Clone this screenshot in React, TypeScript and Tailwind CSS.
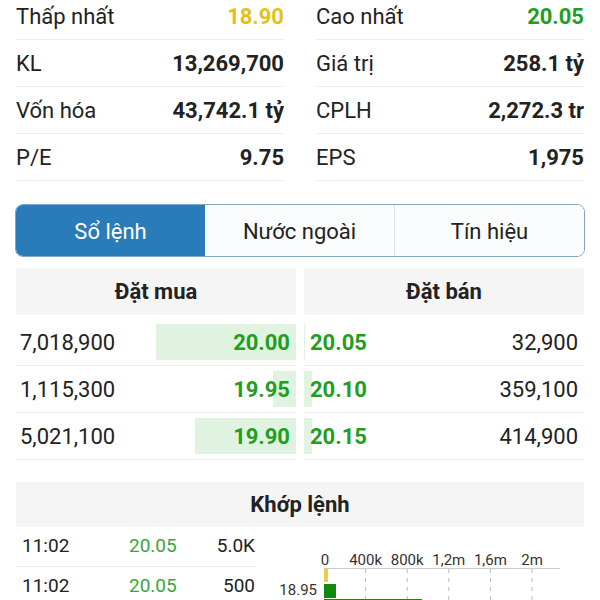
import React from 'react';

const stats = [
  [
    { label: 'Thấp nhất', value: '18.90', color: 'text-[#e5c019]' },
    { label: 'Cao nhất', value: '20.05', color: 'text-[#1f9e1f]' },
  ],
  [
    { label: 'KL', value: '13,269,700', color: 'text-[#222]' },
    { label: 'Giá trị', value: '258.1 tỷ', color: 'text-[#222]' },
  ],
  [
    { label: 'Vốn hóa', value: '43,742.1 tỷ', color: 'text-[#222]' },
    { label: 'CPLH', value: '2,272.3 tr', color: 'text-[#222]' },
  ],
  [
    { label: 'P/E', value: '9.75', color: 'text-[#222]' },
    { label: 'EPS', value: '1,975', color: 'text-[#222]' },
  ],
];

const book = [
  { buyVol: '7,018,900', buy: '20.00', buyBar: 140, sell: '20.05', sellVol: '32,900', sellBar: 1 },
  { buyVol: '1,115,300', buy: '19.95', buyBar: 23, sell: '20.10', sellVol: '359,100', sellBar: 8 },
  { buyVol: '5,021,100', buy: '19.90', buyBar: 101, sell: '20.15', sellVol: '414,900', sellBar: 8 },
];

const trades = [
  { time: '11:02', price: '20.05', vol: '5.0K' },
  { time: '11:02', price: '20.05', vol: '500' },
];

const ticks = ['0', '400k', '800k', '1,2m', '1,6m', '2m'];

function VolumeChart() {
  // x = 68 is the zero line, 41.6px per 400k
  return (
    <svg width="324" height="92" viewBox="0 0 324 92" className="block">
      {ticks.map((t, i) => {
        const x = 68 + i * 41.6;
        return (
          <g key={t}>
            <text x={x + (i === 0 ? 1 : 0)} y="38" fontSize="15" fill="#333" textAnchor="middle" fontFamily="Roboto, sans-serif">
              {t}
            </text>
            {i > 0 && <line x1={x} y1="42" x2={x} y2="92" stroke="#bbb" strokeWidth="1" strokeDasharray="4 5" />}
          </g>
        );
      })}
      <line x1="68" y1="41.5" x2="304" y2="41.5" stroke="#ccc" strokeWidth="1" />
      <rect x="68" y="42" width="4" height="13" fill="#f2c94c" />
      <text x="61" y="68" fontSize="15" fill="#333" textAnchor="end" fontFamily="Roboto, sans-serif">
        18.95
      </text>
      <rect x="68" y="57" width="12" height="14" fill="#0f8a0f" />
      <rect x="68" y="72" width="98" height="14" fill="#0f8a0f" />
    </svg>
  );
}

export default function App() {
  return (
    <div className="w-[600px] h-[600px] overflow-hidden bg-white font-['Roboto',sans-serif] text-[#222]">
      <div className="px-4 -mt-[7px] grid grid-cols-2 gap-x-8">
        {stats.map((row) =>
          row.map((s) => (
            <div key={s.label} className="h-[47px] flex items-center justify-between border-b border-[#eeeeee]">
              <span className="text-[22px]">{s.label}</span>
              <span className={`text-[22px] font-bold ${s.color}`}>{s.value}</span>
            </div>
          ))
        )}
      </div>

      <div className="mx-[15px] mt-[23px] h-[53px] flex rounded-[8px] border-[1.5px] border-[#7ea6c4] overflow-hidden">
        <div className="w-[189px] pt-[2px] flex items-center justify-center bg-[#2a7bb9] text-white text-[22px]">Sổ lệnh</div>
        <div className="flex-1 pt-[2px] flex items-center justify-center bg-[#fbfcfd] text-[22px] border-r border-[#e2e2e2]">Nước ngoài</div>
        <div className="flex-1 pt-[2px] flex items-center justify-center bg-[#fbfcfd] text-[22px]">Tín hiệu</div>
      </div>

      <div className="mx-4 mt-[11px] flex gap-2">
        <div className="flex-1">
          <div className="h-[47px] mb-[4px] flex items-center justify-center bg-[#f5f5f5] text-[22px] font-bold">Đặt mua</div>
          {book.map((b) => (
            <div key={b.buy} className="h-[47px] flex items-center justify-between border-b border-[#eeeeee]">
              <span className="pl-1 text-[22px]">{b.buyVol}</span>
              <div className="h-[36px] flex items-center justify-end bg-[#e0f3e0]" style={{ width: b.buyBar }}>
                <span className="pr-[6px] text-[22px] font-bold text-[#1f9e1f] whitespace-nowrap">{b.buy}</span>
              </div>
            </div>
          ))}
        </div>
        <div className="flex-1">
          <div className="h-[47px] mb-[4px] flex items-center justify-center bg-[#f5f5f5] text-[22px] font-bold">Đặt bán</div>
          {book.map((b) => (
            <div key={b.sell} className="h-[47px] flex items-center justify-between border-b border-[#eeeeee]">
              <div className="h-[36px] flex items-center bg-[#e0f3e0]" style={{ width: b.sellBar }}>
                <span className="pl-[6px] text-[22px] font-bold text-[#1f9e1f] whitespace-nowrap">{b.sell}</span>
              </div>
              <span className="pr-[6px] text-[22px]">{b.sellVol}</span>
            </div>
          ))}
        </div>
      </div>

      <div className="mx-4 mt-[22px] h-[45px] flex items-center justify-center bg-[#f5f5f5] text-[22px] font-bold">Khớp lệnh</div>
      <div className="mx-4 flex items-start">
        <div className="w-[240px]">
          {trades.map((t, i) => (
            <div key={i} className="h-[40px] flex items-center border-b border-[#eeeeee] text-[19px]">
              <span className="pl-[6px] w-[113px]">{t.time}</span>
              <span className="text-[#3aa53a]">{t.price}</span>
              <span className="ml-auto pr-[1px]">{t.vol}</span>
            </div>
          ))}
        </div>
        <VolumeChart />
      </div>
    </div>
  );
}
